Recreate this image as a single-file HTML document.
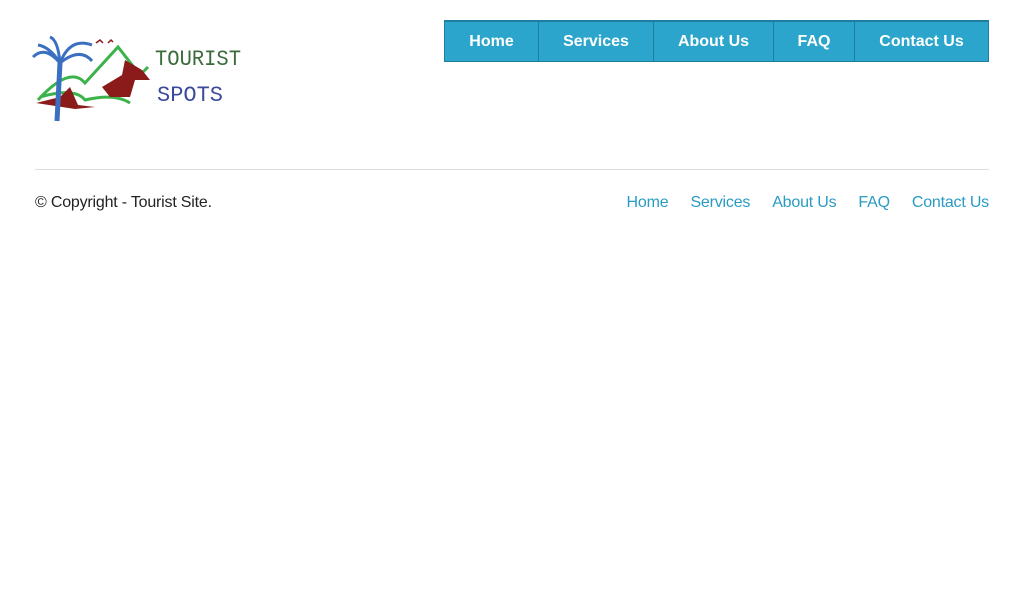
<!DOCTYPE html>
<html><head><meta charset="utf-8"><style>
body{margin:0;background:#fff;font-family:"Liberation Sans",Arial,sans-serif;width:1024px;height:609px;position:relative;overflow:hidden}
.nav{position:absolute;left:444px;top:20px;height:39px;display:flex;border:1px solid #1f7ea0;border-top:2px solid #1f7ea0;background:#2ba5cb}
.nav a{color:#fff;font-weight:bold;font-size:16px;line-height:40px;text-decoration:none;text-align:center;border-left:1px solid #1f7ea0}
.nav a:first-child{border-left:none}
.hr{position:absolute;left:35px;top:169px;width:954px;border-top:1px solid #ddd}
.copy{position:absolute;left:35px;top:194px;font-size:16px;color:#222;letter-spacing:-0.2px}
.fl{position:absolute;right:35px;top:194px;font-size:16px;letter-spacing:-0.2px}
.fl a{color:#2a9bc2;text-decoration:none;margin-left:22px}
</style></head><body>
<svg style="position:absolute;left:30px;top:25px" width="220" height="105" viewBox="0 0 220 105">
<path d="M8 75 Q40 40 55 58 L88 22 L110 50 L118 42" stroke="#3bb34a" stroke-width="3" fill="none"/>
<path d="M10 72 Q45 62 55 75 Q85 68 100 78" stroke="#3bb34a" stroke-width="3" fill="none"/>
<path d="M72 62 L92 50 L95 35 L112 45 L120 55 L105 55 L100 72 L80 72 Z" fill="#8b1a1a"/>
<path d="M6 78 L30 72 L40 62 L48 80 L65 82 L45 84 Z" fill="#8b1a1a"/>
<path d="M27 96 L30 38" stroke="#3b6fc0" stroke-width="5" fill="none"/>
<path d="M30 38 Q15 20 3 32 M30 38 Q20 22 8 20 M30 38 Q40 12 62 20 M30 38 Q28 15 20 12 M30 38 Q50 22 62 36" stroke="#3b6fc0" stroke-width="3" fill="none"/>
<path d="M66 18 l4 -3 l3 3 M78 18 l3 -3 l2 2" stroke="#8b1a1a" stroke-width="1.5" fill="none"/>
<text x="125" y="40" font-family="Liberation Mono,monospace" font-size="22" fill="#3b6b3b" textLength="86" lengthAdjust="spacingAndGlyphs">TOURIST</text>
<text x="127" y="76" font-family="Liberation Mono,monospace" font-size="22" fill="#3b4b9b" textLength="66" lengthAdjust="spacingAndGlyphs">SPOTS</text>
</svg>
<div class="nav">
<a style="width:93px">Home</a><a style="width:114px">Services</a><a style="width:119px">About Us</a><a style="width:80px">FAQ</a><a style="width:133px">Contact Us</a>
</div>
<div class="hr"></div>
<div class="copy">© Copyright - Tourist Site.</div>
<div class="fl"><a>Home</a><a>Services</a><a>About Us</a><a>FAQ</a><a>Contact Us</a></div>
</body></html>
